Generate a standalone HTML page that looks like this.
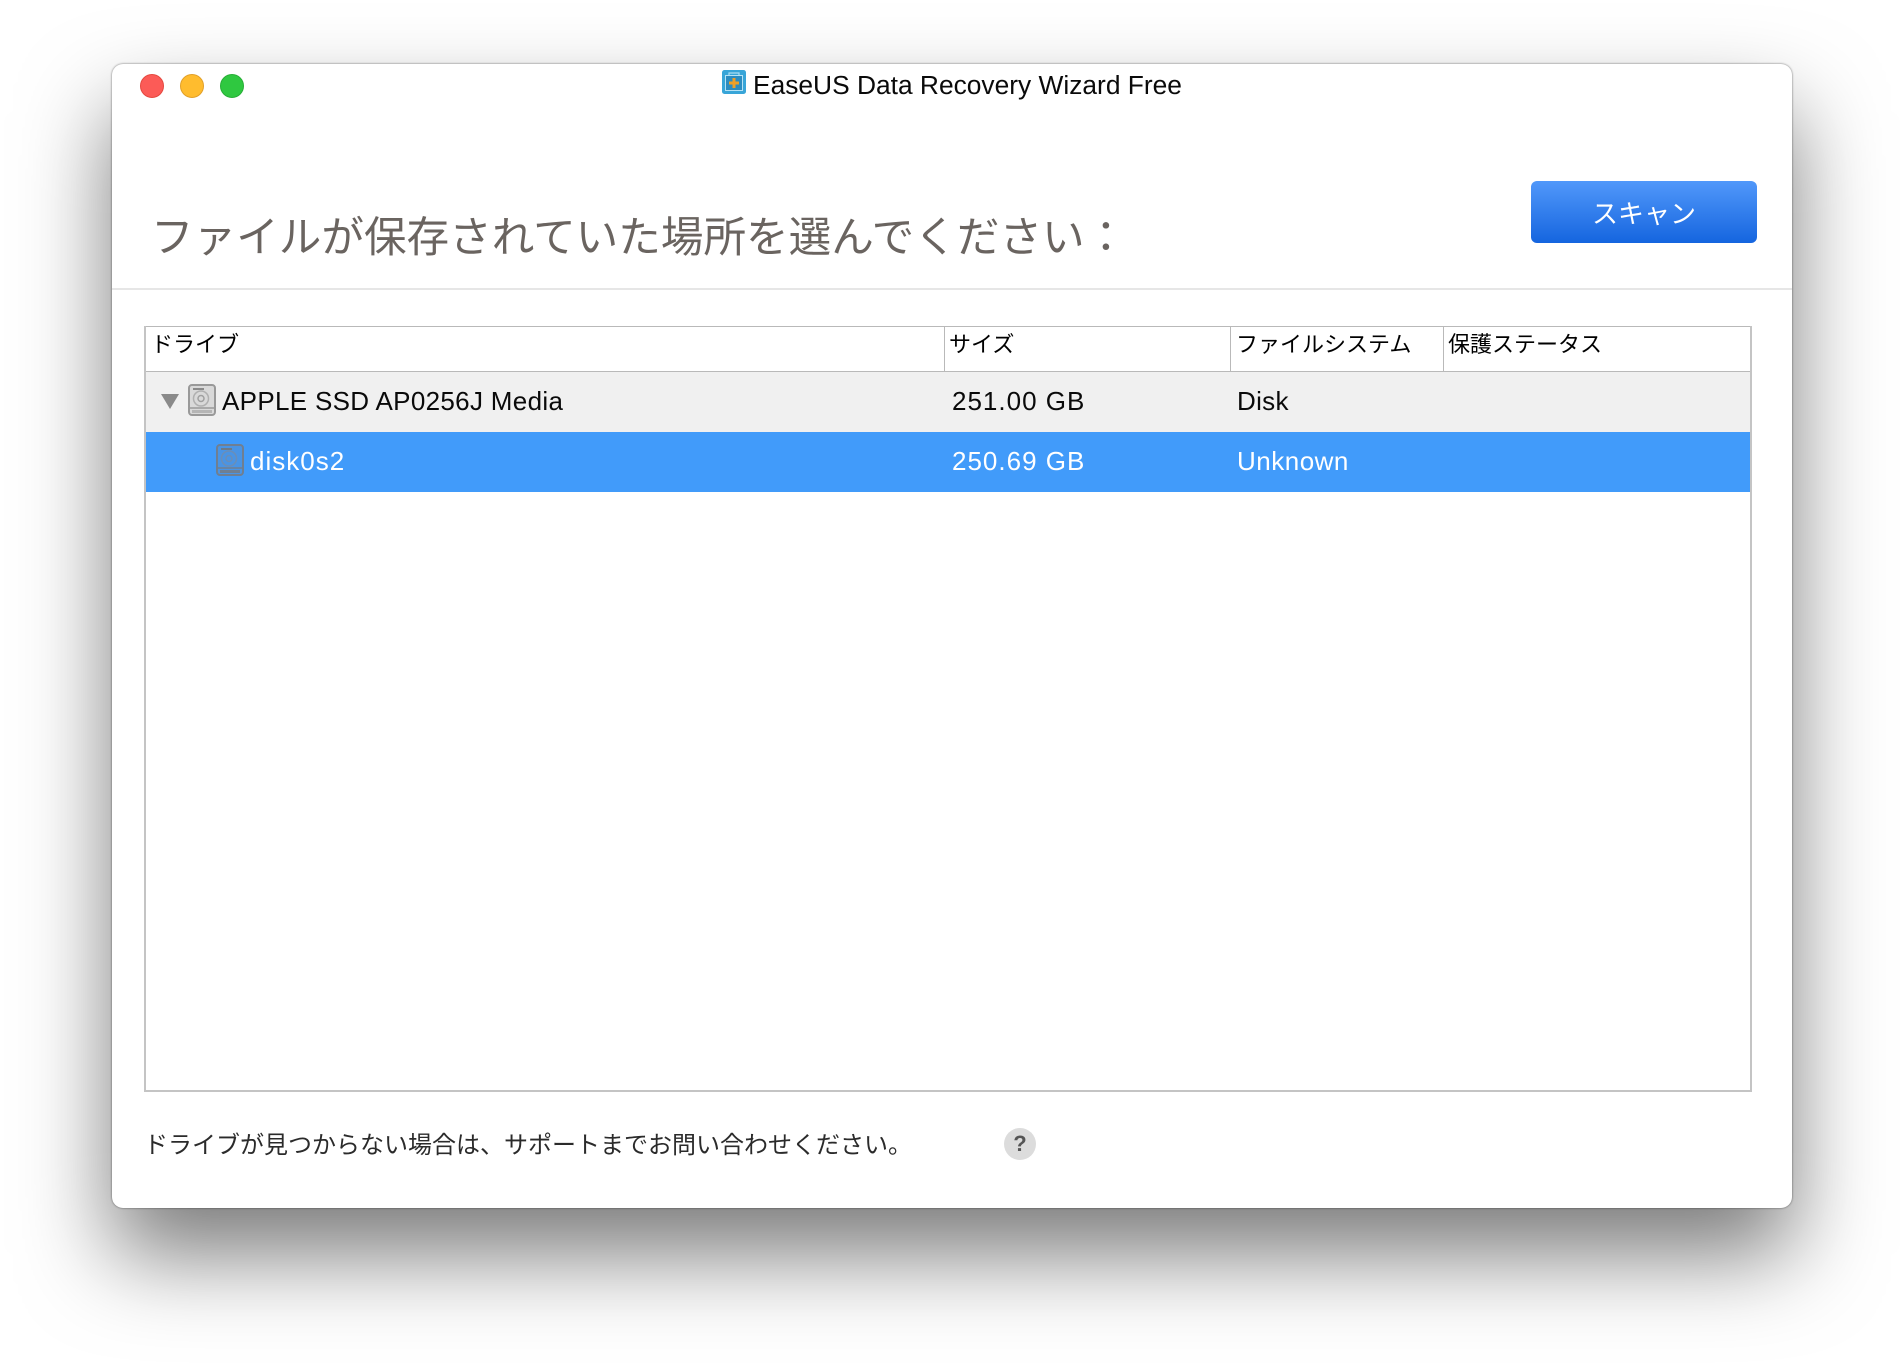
<!DOCTYPE html>
<html lang="ja">
<head>
<meta charset="utf-8">
<title>EaseUS Data Recovery Wizard Free</title>
<style>
html,body{margin:0;padding:0;width:1904px;height:1368px;background:#fff;overflow:hidden}
body{position:relative;font-family:"Liberation Sans","Noto Sans CJK JP",sans-serif;color:#000}
.a{position:absolute;white-space:nowrap}
#win{position:absolute;left:112px;top:64px;width:1680px;height:1144px;background:#fff;border-radius:11px;box-shadow:0 47px 90px rgba(0,0,0,.52),0 0 2px rgba(0,0,0,.55)}
.dot{position:absolute;top:74px;width:24px;height:24px;border-radius:50%;box-sizing:border-box}
.line{position:absolute;background:#b9b9b9}
.h{font-size:22px;line-height:30px;top:330px;font-family:"Liberation Sans","Noto Sans CJK JP",sans-serif}
.r{font-size:26px;line-height:32px}
</style>
</head>
<body>
<div id="win"></div>
<div class="dot" style="left:140px;background:#fc5b57;border:1px solid #e5483f"></div>
<div class="dot" style="left:180px;background:#ffbc2e;border:1px solid #e2a028"></div>
<div class="dot" style="left:220px;background:#2fc840;border:1px solid #27ae36"></div>

<svg class="a" style="left:722px;top:70px" width="24" height="24" viewBox="0 0 24 24">
<rect x="0" y="0" width="24" height="24" rx="2.500" fill="#38a5d8"/>
<path d="M7 5V3h10v2" fill="none" stroke="#a9dcf2" stroke-width="1.200"/>
<rect x="3.500" y="5.500" width="17" height="15" fill="#2c8cc0" stroke="#b5e2f5" stroke-width="1"/>
<path d="M10.500 8h3v3.500H17v3h-3.500V18h-3v-3.500H7v-3h3.500z" fill="#eda029"/>
</svg>
<div class="a" style="left:753px;top:69px;font-size:26.350px;line-height:32px;color:#0a0a0a">EaseUS Data Recovery Wizard Free</div>

<div class="a" style="left:151px;top:205px;font-size:42.600px;line-height:60px;color:#6a6460;font-family:'Noto Sans CJK JP','Liberation Sans',sans-serif;font-weight:400">ファイルが保存されていた場所を選んでください：</div>

<div class="a" style="left:1531px;top:181px;width:226px;height:62px;border-radius:6px;background:linear-gradient(#5198fa,#1565df);color:#fff;font-size:26px;line-height:66px;text-align:center">スキャン</div>

<div class="a" style="left:112px;top:288px;width:1680px;height:2px;background:#e6e6e6"></div>

<!-- table -->
<div class="a" style="left:145px;top:371px;width:1605px;height:61px;background:#f0f0f0"></div>
<div class="a" style="left:145px;top:432px;width:1605px;height:60px;background:#419bfa"></div>
<div class="line" style="left:144px;top:326px;width:1607px;height:1px"></div>
<div class="line" style="left:144px;top:371px;width:1606px;height:1px"></div>
<div class="line" style="left:144px;top:1090px;width:1607px;height:2px;background:#c4c4c4"></div>
<div class="line" style="left:144px;top:326px;width:2px;height:766px;background:#c4c4c4"></div>
<div class="line" style="left:1750px;top:326px;width:2px;height:766px;background:#c4c4c4"></div>
<div class="line" style="left:944px;top:326px;width:1px;height:45px"></div>
<div class="line" style="left:1230px;top:326px;width:1px;height:45px"></div>
<div class="line" style="left:1443px;top:326px;width:1px;height:45px"></div>

<div class="a h" style="left:151px">ドライブ</div>
<div class="a h" style="left:949px">サイズ</div>
<div class="a h" style="left:1236px">ファイルシステム</div>
<div class="a h" style="left:1448px">保護ステータス</div>

<svg class="a" style="left:161px;top:394px" width="18" height="15" viewBox="0 0 18 15"><path d="M0 0h18L9 15z" fill="#8a8a8a"/></svg>

<svg class="a" style="left:188px;top:384px" width="28" height="32" viewBox="0 0 28 32">
<rect x="1" y="1" width="26" height="30" rx="3" fill="#d9d9d9" stroke="#999" stroke-width="2"/>
<rect x="5" y="4" width="11" height="2" fill="#8a8a8a"/>
<circle cx="13" cy="14.500" r="7.500" fill="none" stroke="#b0b0b0" stroke-width="1.500"/>
<circle cx="13" cy="14.500" r="3" fill="none" stroke="#a0a0a0" stroke-width="1.500"/>
<path d="M1 24h26" stroke="#999" stroke-width="1.500"/>
<path d="M4 27.500h20" stroke="#b5b5b5" stroke-width="3"/>
</svg>
<div class="a r" style="left:222px;top:385px;color:#0a0a0a;letter-spacing:.32px">APPLE SSD AP0256J Media</div>
<div class="a r" style="left:952px;top:385px;color:#0a0a0a;letter-spacing:1px">251.00 GB</div>
<div class="a r" style="left:1237px;top:385px;color:#0a0a0a;letter-spacing:.3px">Disk</div>

<svg class="a" style="left:216px;top:444px" width="28" height="32" viewBox="0 0 28 32">
<rect x="1" y="1" width="26" height="30" rx="3" fill="#4a94e4" stroke="#6f7f92" stroke-width="2"/>
<rect x="5" y="4" width="11" height="2" fill="#6d7a88"/>
<circle cx="13" cy="14.500" r="7.500" fill="none" stroke="#6a8eb8" stroke-width="1.500"/>
<circle cx="13" cy="14.500" r="3" fill="none" stroke="#6a8eb8" stroke-width="1.500"/>
<path d="M1 24h26" stroke="#6f7f92" stroke-width="1.500"/>
<path d="M4 27.500h20" stroke="#6f7f92" stroke-width="3"/>
</svg>
<div class="a r" style="left:250px;top:445px;color:#fff;letter-spacing:1px">disk0s2</div>
<div class="a r" style="left:952px;top:445px;color:#fff;letter-spacing:1px">250.69 GB</div>
<div class="a r" style="left:1237px;top:445px;color:#fff;letter-spacing:.5px">Unknown</div>

<div class="a" style="left:144px;top:1129px;font-size:24px;line-height:34px;color:#2b2b2b">ドライブが見つからない場合は、サポートまでお問い合わせください。</div>

<div class="a" style="left:1004px;top:1128px;width:32px;height:32px;border-radius:50%;background:#dcdcdc;color:#555;font-size:22px;font-weight:700;line-height:32px;text-align:center">?</div>
</body>
</html>
